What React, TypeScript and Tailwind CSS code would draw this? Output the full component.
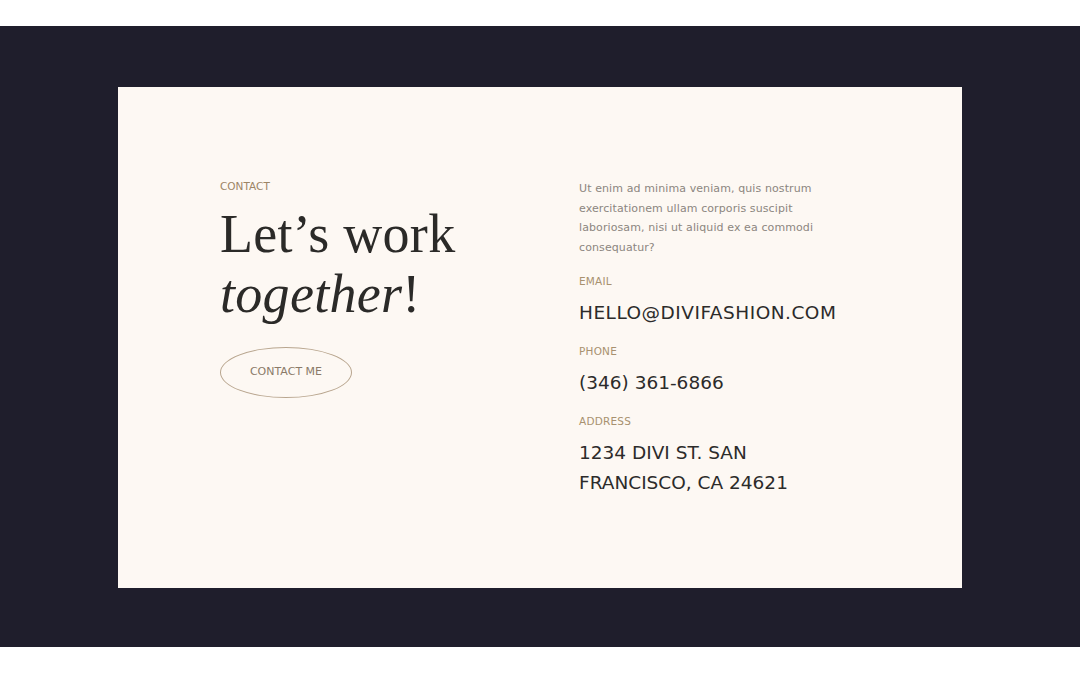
import React from 'react';

const sans = { fontFamily: '"DejaVu Sans", "Open Sans", sans-serif' };
const serif = { fontFamily: '"Liberation Serif", "DejaVu Serif", serif' };

function Field({ label, children, wide }: { label: string; children: React.ReactNode; wide?: boolean }) {
  return (
    <div className="mb-[16px]">
      <div className="text-[10.5px] leading-[14px] tracking-[0.2px] text-[#a8916f]">{label}</div>
      <div className={`mt-[10px] text-[18.5px] leading-[30px] text-[#2c2b2a] ${wide ? 'tracking-[0.5px]' : ''}`}>{children}</div>
    </div>
  );
}

export default function App() {
  return (
    <div className="w-[1080px] h-[675px] bg-white pt-[26px]" style={sans}>
      <div className="h-[621px] bg-[#1f1e2c] px-[118px] pt-[61px]">
        <div className="h-[501px] bg-[#fdf8f3] flex pl-[102px] pt-[92px]">
          <div className="w-[359px]">
            <div className="text-[10.5px] leading-[14px] text-[#9c8566]">CONTACT</div>
            <h1 className="mt-[11px] text-[54px] leading-[60px] tracking-[0.3px] text-[#2b2a28]" style={serif}>
              Let’s work
              <br />
              <em>together</em>!
            </h1>
            <button className="mt-[23px] w-[132px] h-[51px] rounded-[50%] border border-[#b8a58e] text-[11px] text-[#8a7a68]" style={sans}>
              CONTACT ME
            </button>
          </div>
          <div className="w-[270px]">
            <p className="w-[250px] text-[11px] leading-[19.6px] tracking-[0.1px] text-[#8c8680]">
              Ut enim ad minima veniam, quis nostrum exercitationem ullam corporis suscipit laboriosam, nisi ut aliquid ex ea commodi consequatur?
            </p>
            <div className="mt-[17px]">
              <Field label="EMAIL" wide>HELLO@DIVIFASHION.COM</Field>
              <Field label="PHONE">(346) 361-6866</Field>
              <Field label="ADDRESS">
                1234 DIVI ST. SAN
                <br />
                FRANCISCO, CA 24621
              </Field>
            </div>
          </div>
        </div>
      </div>
    </div>
  );
}
